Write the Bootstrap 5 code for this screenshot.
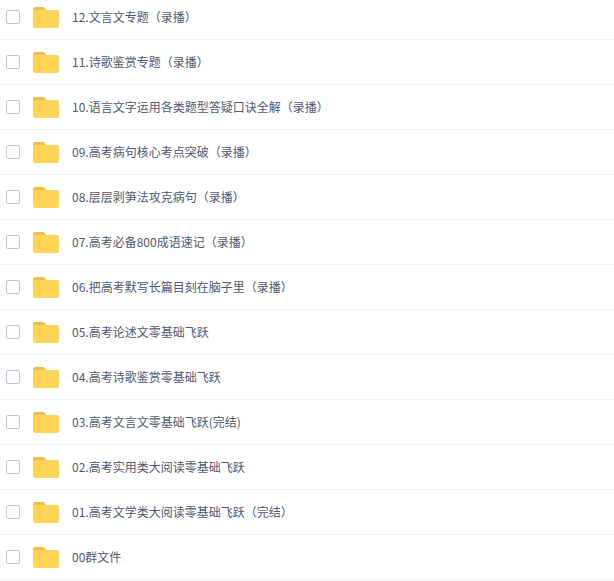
<!DOCTYPE html>
<html lang="zh-CN">
<head>
    <meta charset="UTF-8">
    <meta name="viewport" content="width=device-width, initial-scale=1.0">
    <title>文件列表</title>
    <link href="https://cdn.jsdelivr.net/npm/bootstrap@5.3.0/dist/css/bootstrap.min.css" rel="stylesheet">
    <style>
        html, body { overflow: hidden; background: #fff; }
        .file-list { margin-top: -5px; }
        .file-row {
            height: 45px;
            padding-left: 6px;
            border-bottom: 1px solid #f1f4f9;
        }
        .file-check {
            width: 14px;
            height: 14px;
            margin: 0 13px 0 0;
            border: 1px solid #bcc7d6;
            border-radius: 2px;
            background: #fff;
        }
        .file-icon { width: 26px; height: 21px; margin: 1px 13px 0 0; flex: none; }
        .file-name {
            font-family: "Noto Sans CJK SC", "Liberation Sans", sans-serif;
            font-size: 12px;
            color: #4f596f;
            white-space: nowrap;
        }
    </style>
</head>
<body class="m-0">

    <div class="file-list" id="list"></div>

    <script>
        const names = [
            "12.文言文专题（录播）",
            "11.诗歌鉴赏专题（录播）",
            "10.语言文字运用各类题型答疑口诀全解（录播）",
            "09.高考病句核心考点突破（录播）",
            "08.层层剥笋法攻克病句（录播）",
            "07.高考必备800成语速记（录播）",
            "06.把高考默写长篇目刻在脑子里（录播）",
            "05.高考论述文零基础飞跃",
            "04.高考诗歌鉴赏零基础飞跃",
            "03.高考文言文零基础飞跃(完结)",
            "02.高考实用类大阅读零基础飞跃",
            "01.高考文学类大阅读零基础飞跃（完结）",
            "00群文件"
        ];
        const folder = `<svg class="file-icon" viewBox="0 0 26 21">
            <path d="M0 2a2 2 0 0 1 2-2h8a2 2 0 0 1 1.6.8L13 3v3H0z" fill="#ecbd4f"/>
            <path d="M0 5a2 2 0 0 1 2-2h22a2 2 0 0 1 2 2v14a2 2 0 0 1-2 2H2a2 2 0 0 1-2-2z" fill="#ffd457"/>
        </svg>`;
        document.getElementById("list").innerHTML = names.map(name =>
            `<div class="file-row d-flex align-items-center">
                <div class="file-check flex-shrink-0"></div>
                ${folder}
                <span class="file-name">${name}</span>
            </div>`).join("");
    </script>

    <script src="https://cdn.jsdelivr.net/npm/bootstrap@5.3.0/dist/js/bootstrap.bundle.min.js"></script>
</body>
</html>
